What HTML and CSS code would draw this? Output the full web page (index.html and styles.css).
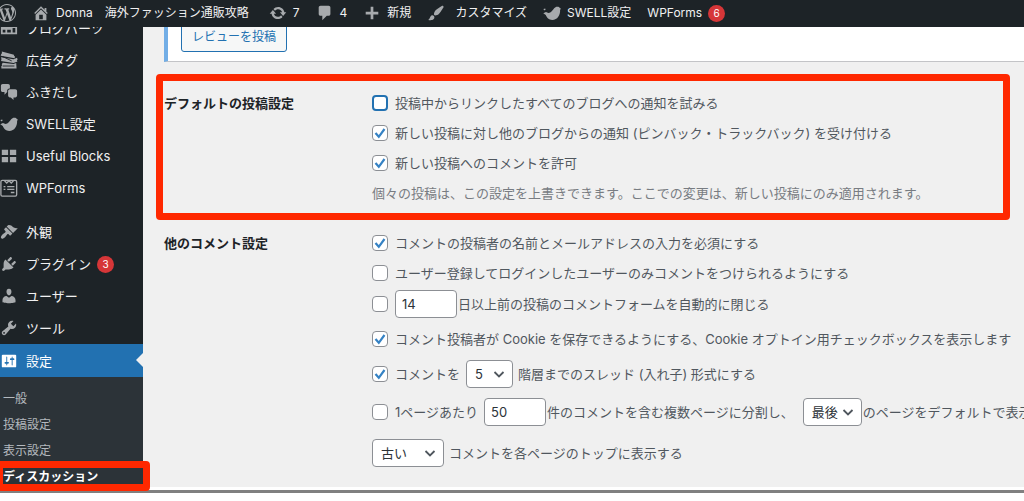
FILE: index.html
```html
<!DOCTYPE html>
<html lang="ja">
<head>
<meta charset="utf-8">
<meta name="viewport" content="width=device-width, initial-scale=1">
<title>ディスカッション設定</title>
<link rel="stylesheet" href="styles.css">
</head>
<body>
<svg class="sprite" aria-hidden="true">
  <symbol id="i-bird" viewBox="0 0 20 20"><path d="M.5 5.500 2.500 4.900 2.800 6.800 1.200 7zM3.300 9c2.200 1.400 4.600 1.200 6.700-1.200 1.700-2 2.800-4.800 5.900-4.800 1.500 0 2.400.6 2.800 1.500L20 5.200l-1 1.300c.4 6-2.900 11.300-8.700 11.300-3.800 0-6.100-2.700-7.200-5.500L.3 10.200z"/></symbol>
</svg>
<header class="adminbar">
  <a class="bar-item bar-logo" href="#" aria-label="WordPress"><svg class="icon" viewBox="0 0 20 20"><path d="M20 10c0-5.510-4.490-10-10-10C4.480 0 0 4.490 0 10c0 5.520 4.480 10 10 10 5.510 0 10-4.480 10-10zM7.780 15.370L4.370 6.220c.55-.02 1.170-.08 1.170-.08.5-.06.44-1.130-.06-1.110 0 0-1.450.11-2.370.11-.18 0-.37 0-.58-.01C4.120 2.690 6.870 1.110 10 1.110c2.330 0 4.450.87 6.050 2.340-.68-.11-1.650.39-1.650 1.580 0 .74.45 1.360.9 2.100.35.61.55 1.360.55 2.460 0 1.490-1.400 5-1.400 5l-3.030-8.370c.54-.02.82-.17.82-.17.5-.05.44-1.250-.06-1.220 0 0-1.440.12-2.380.12-.87 0-2.330-.12-2.330-.12-.5-.03-.56 1.200-.06 1.220l.92.08 1.260 3.410zM17.410 10c.24-.64.74-1.870.43-4.250.7 1.290 1.050 2.710 1.050 4.250 0 3.290-1.730 6.240-4.400 7.780.97-2.590 1.940-5.200 2.920-7.780zM6.100 18.090C3.120 16.650 1.110 13.530 1.110 10c0-1.300.23-2.480.72-3.590C3.250 10.300 4.670 14.200 6.100 18.090zm4.030-6.630l2.580 6.980c-.86.29-1.760.45-2.710.45-.79 0-1.570-.11-2.290-.33.81-2.380 1.620-4.740 2.420-7.100z"/></svg></a>
  <a class="bar-item" href="#"><svg class="icon" viewBox="0 0 20 20"><path d="M16 8.500l1.530 1.530-1.060 1.060L10 4.600l-6.470 6.490-1.060-1.060L10 2.500l4 4v-2h2v4zm-6-2.460l6 5.990V18H4v-5.970zM12 17v-5H8v5h4z"/></svg><span>Donna</span><span class="site-name">海外ファッション通販攻略</span></a>
  <a class="bar-item" href="#"><svg class="icon" viewBox="0 0 20 20"><path d="M10.200 3.280c3.530 0 6.430 2.610 6.920 6h2.080l-3.500 4-3.500-4h2.320c-.45-1.970-2.210-3.450-4.320-3.450-1.450 0-2.730.71-3.540 1.780L4.950 5.660C6.230 4.200 8.110 3.280 10.200 3.280zm-.4 13.440c-3.520 0-6.430-2.610-6.920-6H.8l3.500-4c1.170 1.330 2.330 2.670 3.500 4H5.480c.45 1.970 2.210 3.450 4.320 3.450 1.450 0 2.730-.71 3.540-1.780l1.710 1.950c-1.280 1.460-3.150 2.380-5.250 2.380z"/></svg><span>7</span></a>
  <a class="bar-item" href="#"><svg class="icon" viewBox="0 0 20 20"><path d="M5 2h9c1.100 0 2 .9 2 2v7c0 1.100-.9 2-2 2h-2l-5 5v-5H5c-1.100 0-2-.9-2-2V4c0-1.100.9-2 2-2z"/></svg><span>4</span></a>
  <a class="bar-item" href="#"><svg class="icon" viewBox="0 0 20 20"><path d="M17 8.700v3h-5.500V17h-3v-5.300H3v-3h5.500V3h3v5.700z"/></svg><span>新規</span></a>
  <a class="bar-item bar-customize" href="#"><svg class="icon" viewBox="0 0 20 20"><path d="M18.330 3.570s.27-.8-.31-1.360c-.53-.52-1.220-.24-1.220-.24-.61.3-5.760 3.470-7.670 5.570-.86.96-2.060 3.790-1.090 4.820.92.98 3.960-.17 4.790-1 2.060-2.060 5.210-7.170 5.500-7.790zM1.400 17.650c2.370-1.560 1.460-3.410 3.230-4.640.93-.65 2.220-.62 3.080.29.63.67.8 2.570-.16 3.460-1.570 1.450-4 1.550-6.150.89z"/></svg><span>カスタマイズ</span></a>
  <a class="bar-item" href="#"><svg class="icon"><use href="#i-bird"/></svg><span>SWELL設定</span></a>
  <a class="bar-item" href="#"><span>WPForms</span><span class="badge">6</span></a>
</header>

<div class="shell">
  <nav class="sidebar" aria-label="管理メニュー">
    <ul class="menu">
      <li><a class="menu-link" href="#"><svg class="icon" viewBox="0 0 20 20"><path fill-rule="evenodd" d="M1 3h18v14H1zm2 9v3h3v-3zm5 0v3h4v-3zm6-2v5h3v-5z"/></svg>ブログパーツ</a></li>
      <li><a class="menu-link" href="#"><svg class="icon" viewBox="0 0 20 20"><path d="M2 .5 15.500 4.200c-.2 1 .3 1.600 1.200 1.900l-.5 2L.8 5.200l.4-1.600c.8 0 1.200-1.800.8-3.100zM1 7l14 2.200 4-1.600.5 2.200c-1 .5-1 1.300 0 1.900l-4.500 1.700L1 11.200c.8-1 .8-2.700 0-4.200zM3 13l12 1.400 3-1 .4 6.100H1.500v-2.700c1-.2 1.200-1 .4-1.700z"/><path class="icon-gap" d="M3 6.200 13 11M3 16.700h13"/></svg>広告タグ</a></li>
      <li><a class="menu-link" href="#"><svg class="icon" viewBox="0 0 20 20"><path d="M11 6h-.82C9.070 6 8 7.200 8 8.160V10l-3 3v-3H3c-1.100 0-2-.9-2-2V3c0-1.100.9-2 2-2h6c1.100 0 2 .9 2 2v3zm0 1h6c1.100 0 2 .9 2 2v5c0 1.100-.9 2-2 2h-2v3l-3-3h-1c-1.100 0-2-.9-2-2V9c0-1.100.9-2 2-2z"/></svg>ふきだし</a></li>
      <li><a class="menu-link" href="#"><svg class="icon"><use href="#i-bird"/></svg>SWELL設定</a></li>
      <li><a class="menu-link" href="#"><svg class="icon" viewBox="0 0 20 20"><path d="M2 3h7v6H2zm9 0h7v6h-7zM2 11h7v6H2zm9 0h7v6h-7z"/></svg>Useful Blocks</a></li>
      <li><a class="menu-link" href="#"><svg class="icon" viewBox="0 0 20 20"><rect class="icon-line" x="1" y="1.500" width="17.500" height="17.500" rx="1.500"/><path class="icon-line" d="m5 2 2.500 2.500L10 2l2.500 2.500L15 2M4 8.500h2m2 0h8M4 11.500h2m2 0h8M12 15h4"/></svg>WPForms</a></li>
      <li class="menu-gap"><a class="menu-link" href="#"><svg class="icon" viewBox="0 0 20 20"><path d="M14.480 11.060L7.410 3.990l1.500-1.500c.5-.56 2.300-.47 3.510.32 1.210.8 1.430 1.280 2.910 2.100 1.180.64 2.450 1.260 4.450.85zm-.71.71L6.700 4.700 4.930 6.470c-.39.39-.39 1.020 0 1.410l1.060 1.060c.39.39.39 1.030 0 1.420-.6.6-1.430 1.110-2.210 1.690-.35.26-.7.53-1.010.84C1.430 14.230.4 16.080 1.400 17.070c.99 1 2.840-.03 4.180-1.360.31-.31.58-.66.85-1.020.57-.78 1.080-1.610 1.690-2.210.39-.39 1.020-.39 1.410 0l1.060 1.060c.39.39 1.020.39 1.410 0z"/></svg>外観</a></li>
      <li><a class="menu-link" href="#"><svg class="icon" viewBox="0 0 20 20"><path d="M13.110 4.360L9.870 7.600 8 5.730l3.240-3.240c.35-.34 1.050-.2 1.560.32.52.51.66 1.210.31 1.550zm-8 1.770l.91-1.120 9.010 9.010-1.190.84c-.71.71-2.630 1.160-3.820 1.160H6.140L4.900 17.260c-.59.59-1.540.59-2.120 0-.59-.58-.59-1.530 0-2.120l1.240-1.240v-3.880c0-1.130.4-3.190 1.090-3.890zm7.260 3.970l3.240-3.240c.34-.35 1.040-.21 1.550.31.52.51.66 1.210.31 1.550l-3.240 3.250z"/></svg>プラグイン<span class="badge">3</span></a></li>
      <li><a class="menu-link" href="#"><svg class="icon" viewBox="0 0 20 20"><path d="M10 9.250c-2.270 0-2.730-3.440-2.730-3.440C7 4.020 7.820 2 9.970 2c2.160 0 2.980 2.020 2.710 3.810 0 0-.41 3.440-2.680 3.440zm0 2.570L12.720 10c2.390 0 4.520 2.330 4.520 4.530v2.490s-3.650 1.130-7.240 1.130c-3.650 0-7.240-1.130-7.240-1.130v-2.490c0-2.250 1.940-4.480 4.470-4.480z"/></svg>ユーザー</a></li>
      <li><a class="menu-link" href="#"><svg class="icon" viewBox="0 0 20 20"><path d="M16.680 9.770c-1.340 1.340-3.300 1.670-4.950.99l-5.410 6.520c-.99.99-2.590.99-3.580 0s-.99-2.590 0-3.570l6.520-5.420c-.68-1.650-.35-3.610.99-4.950 1.280-1.280 3.120-1.620 4.720-1.060l-2.890 2.890 2.820 2.820 2.860-2.870c.53 1.580.18 3.390-1.080 4.650zM3.810 16.210c.4.39 1.040.39 1.430 0 .4-.4.4-1.040 0-1.430-.39-.4-1.030-.4-1.430 0-.39.39-.39 1.030 0 1.430z"/></svg>ツール</a></li>
      <li>
        <a class="menu-link current" href="#"><svg class="icon" viewBox="0 0 20 20"><path d="M18 16V4c0-.55-.45-1-1-1H3c-.55 0-1 .45-1 1v12c0 .55.45 1 1 1h14c.55 0 1-.45 1-1zM8 11h1c.55 0 1 .45 1 1s-.45 1-1 1H8v1.500c0 .28-.22.5-.5.5s-.5-.22-.5-.5V13H6c-.55 0-1-.45-1-1s.45-1 1-1h1V5.500c0-.28.22-.5.5-.5s.5.22.5.5V11zm5-2h-1c-.55 0-1-.45-1-1s.45-1 1-1h1V5.500c0-.28.22-.5.5-.5s.5.22.5.5V7h1c.55 0 1 .45 1 1s-.45 1-1 1h-1v5.500c0 .28-.22.5-.5.5s-.5-.22-.5-.5V9z"/></svg>設定</a>
        <ul class="submenu">
          <li><a href="#">一般</a></li>
          <li><a href="#">投稿設定</a></li>
          <li><a href="#">表示設定</a></li>
          <li class="marked"><a href="#" aria-current="page">ディスカッション</a></li>
        </ul>
      </li>
    </ul>
  </nav>

  <main class="content">
    <div class="notice"><button class="btn" type="button">レビューを投稿</button></div>

    <section class="group group-marked" aria-labelledby="g1">
      <h2 class="group-title" id="g1">デフォルトの投稿設定</h2>
      <div class="rows">
        <div class="row"><label><input class="check focused" type="checkbox">投稿中からリンクしたすべてのブログへの通知を試みる</label></div>
        <div class="row"><label><input class="check" type="checkbox" checked>新しい投稿に対し他のブログからの通知 (ピンバック・トラックバック) を受け付ける</label></div>
        <div class="row"><label><input class="check" type="checkbox" checked>新しい投稿へのコメントを許可</label></div>
        <p class="row hint">個々の投稿は、この設定を上書きできます。ここでの変更は、新しい投稿にのみ適用されます。</p>
      </div>
    </section>

    <section class="group" aria-labelledby="g2">
      <h2 class="group-title" id="g2">他のコメント設定</h2>
      <div class="rows">
        <div class="row"><label><input class="check" type="checkbox" checked>コメントの投稿者の名前とメールアドレスの入力を必須にする</label></div>
        <div class="row"><label><input class="check" type="checkbox">ユーザー登録してログインしたユーザーのみコメントをつけられるようにする</label></div>
        <div class="row row-field">
          <input class="check" type="checkbox" id="close" aria-label="コメントフォームを自動的に閉じる">
          <input class="field" type="text" id="days" value="14"><label for="days">日以上前の投稿のコメントフォームを自動的に閉じる</label>
        </div>
        <div class="row row-tall"><label><input class="check" type="checkbox" checked>コメント投稿者が Cookie を保存できるようにする、Cookie オプトイン用チェックボックスを表示します</label></div>
        <div class="row row-field">
          <label class="lead"><input class="check" type="checkbox" checked>コメントを</label>
          <select class="select select-s trail" id="depth"><option>5</option></select><label for="depth">階層までのスレッド (入れ子) 形式にする</label>
        </div>
        <div class="row row-paging">
          <label class="lead"><input class="check" type="checkbox">1ページあたり</label>
          <input class="field" type="text" id="per" value="50"><label for="per">件のコメントを含む複数ページに分割し、</label>
          <select class="select select-m" id="page"><option>最後</option></select><label for="page">のページをデフォルトで表示</label>
        </div>
        <div class="row row-tall">
          <select class="select select-l trail" id="order"><option>古い</option></select><label for="order">コメントを各ページのトップに表示する</label>
        </div>
      </div>
    </section>
  </main>
</div>
</body>
</html>
```
FILE: styles.css
```css
:root {
  --dark: #1d2327;
  --bg: #f0f0f0;
  --blue: #2271b1;
  --red: #ff2800;
  --icon: #a7aaad;
}

* { box-sizing: border-box; }

body {
  margin: 0;
  background: #fff;
  color: #50575e;
  font: 13px/20px Inter, "Noto Sans CJK JP", sans-serif;
  overflow: hidden;
}

a { color: inherit; text-decoration: none; }
ul { list-style: none; margin: 0; padding: 0; }
.sprite { position: absolute; width: 0; height: 0; }

.icon { width: 18px; height: 18px; flex: none; fill: var(--icon); }
.icon-line { fill: none; stroke: var(--icon); stroke-width: 1.5; }
.icon-gap { fill: none; stroke: var(--dark); stroke-width: 1; }

.badge {
  width: 17px;
  height: 17px;
  border-radius: 50%;
  background: #d63638;
  color: #fff;
  font-size: 10px;
  line-height: 17px;
  text-align: center;
}

/* Top bar */
.adminbar {
  position: relative;
  z-index: 2;
  display: flex;
  align-items: center;
  gap: 16px;
  height: 27px;
  padding-bottom: 1px;
  background: var(--dark);
  color: #f0f0f1;
  font-size: 12px;
  white-space: nowrap;
}
.bar-item { display: flex; align-items: center; gap: 6px; }
.bar-logo { margin-left: -2px; }
.bar-customize { gap: 10px; }
.site-name { margin: 0 4px 0 6px; }

/* Page body */
.shell {
  display: flex;
  border-bottom: 3px solid #808080;
  box-shadow: 0 1px 3px #aaa;
}

.sidebar {
  flex: none;
  width: 143px;
  background: var(--dark);
  color: #f0f0f1;
}
.menu { margin-top: -15px; }
.menu-link {
  position: relative;
  display: flex;
  align-items: center;
  gap: 8px;
  height: 32px;
}
.menu-link .badge { margin-left: -2px; }
.menu-gap { margin-top: 12px; }
.current { height: 33px; background: var(--blue); color: #fff; }
.current .icon { fill: #fff; }
.current::after {
  content: "";
  position: absolute;
  right: 0;
  top: 9px;
  border: 7px solid transparent;
  border-left-width: 0;
  border-right-color: var(--bg);
}
.submenu {
  padding-top: 9px;
  background: #2c3338;
  color: #b4b9be;
  font-size: 12px;
}
.submenu a { display: block; padding-left: 3px; line-height: 26px; }
.marked { position: relative; color: #fff; font-weight: 700; }
.marked::after {
  content: "";
  position: absolute;
  inset: -3px -7px -1px -4px;
  border: 7px solid var(--red);
  border-radius: 4px;
  pointer-events: none;
}

/* Settings form */
.content {
  flex: 1;
  min-width: 0;
  overflow: hidden;
  background: var(--bg);
  border-bottom: 3px solid #fff;
}
.notice {
  margin-left: 21px;
  padding: 0 13px 9px;
  background: #fff;
  border-left: 4px solid #72aee6;
  border-bottom: 1px solid #c3c4c7;
}
.btn {
  display: block;
  height: 30px;
  margin-top: -5px;
  padding: 0 10px;
  border: 1px solid var(--blue);
  border-radius: 3px;
  background: #f6f7f7;
  color: var(--blue);
  font: inherit;
  font-size: 12px;
}

.group {
  display: grid;
  grid-template-columns: 208px 1fr;
  padding: 8px 0 12px 21px;
  white-space: nowrap;
}
.group-marked {
  margin: 12px 14px 0 13px;
  padding: 7px 0 5px 1px;
  border: 7px solid var(--red);
  border-radius: 4px;
}
.group-title {
  margin: 0;
  color: #1d2327;
  font-size: 13px;
  font-weight: 700;
  line-height: 30px;
}
.rows { min-width: 0; }
.row { display: flex; align-items: center; height: 30px; margin: 0; }
.row-field { height: 32px; }
.row-tall { height: 38px; }
.row-paging { height: 44px; }
.row label { display: flex; align-items: center; }
.lead { margin-right: 6px; }
.hint { color: #787c82; }

.check {
  appearance: none;
  flex: none;
  width: 16px;
  height: 16px;
  margin: 0 7px 0 0;
  border: 1px solid #8c8f94;
  border-radius: 4px;
  background: #fff;
}
.check:checked {
  background: #fff url("data:image/svg+xml,%3Csvg xmlns='http://www.w3.org/2000/svg' viewBox='0 0 14 14'%3E%3Cpath d='M2.500 7l3.300 3.800L11.500 3' fill='none' stroke='%233582c4' stroke-width='2.200'/%3E%3C/svg%3E") center / 14px no-repeat;
}
.focused { border: 2px solid var(--blue); }

.field,
.select {
  flex: none;
  height: 28px;
  margin: 0 1px 0 0;
  border: 1px solid #8c8f94;
  border-radius: 4px;
  background: #fff;
  color: #2c3338;
  font: inherit;
}
.field { width: 62px; padding: 0 6px; }
.select {
  appearance: none;
  padding: 0 0 0 8px;
  background: #fff url("data:image/svg+xml,%3Csvg xmlns='http://www.w3.org/2000/svg' viewBox='0 0 12 12'%3E%3Cpath d='M1.500 4L6 8.500 10.500 4' fill='none' stroke='%2350575e' stroke-width='1.800'/%3E%3C/svg%3E") right 7px center / 12px no-repeat;
}
.select-s { width: 47px; }
.select-m { width: 59px; margin-left: 9px; }
.select-l { width: 72px; }
.trail { margin-right: 5px; }
```
